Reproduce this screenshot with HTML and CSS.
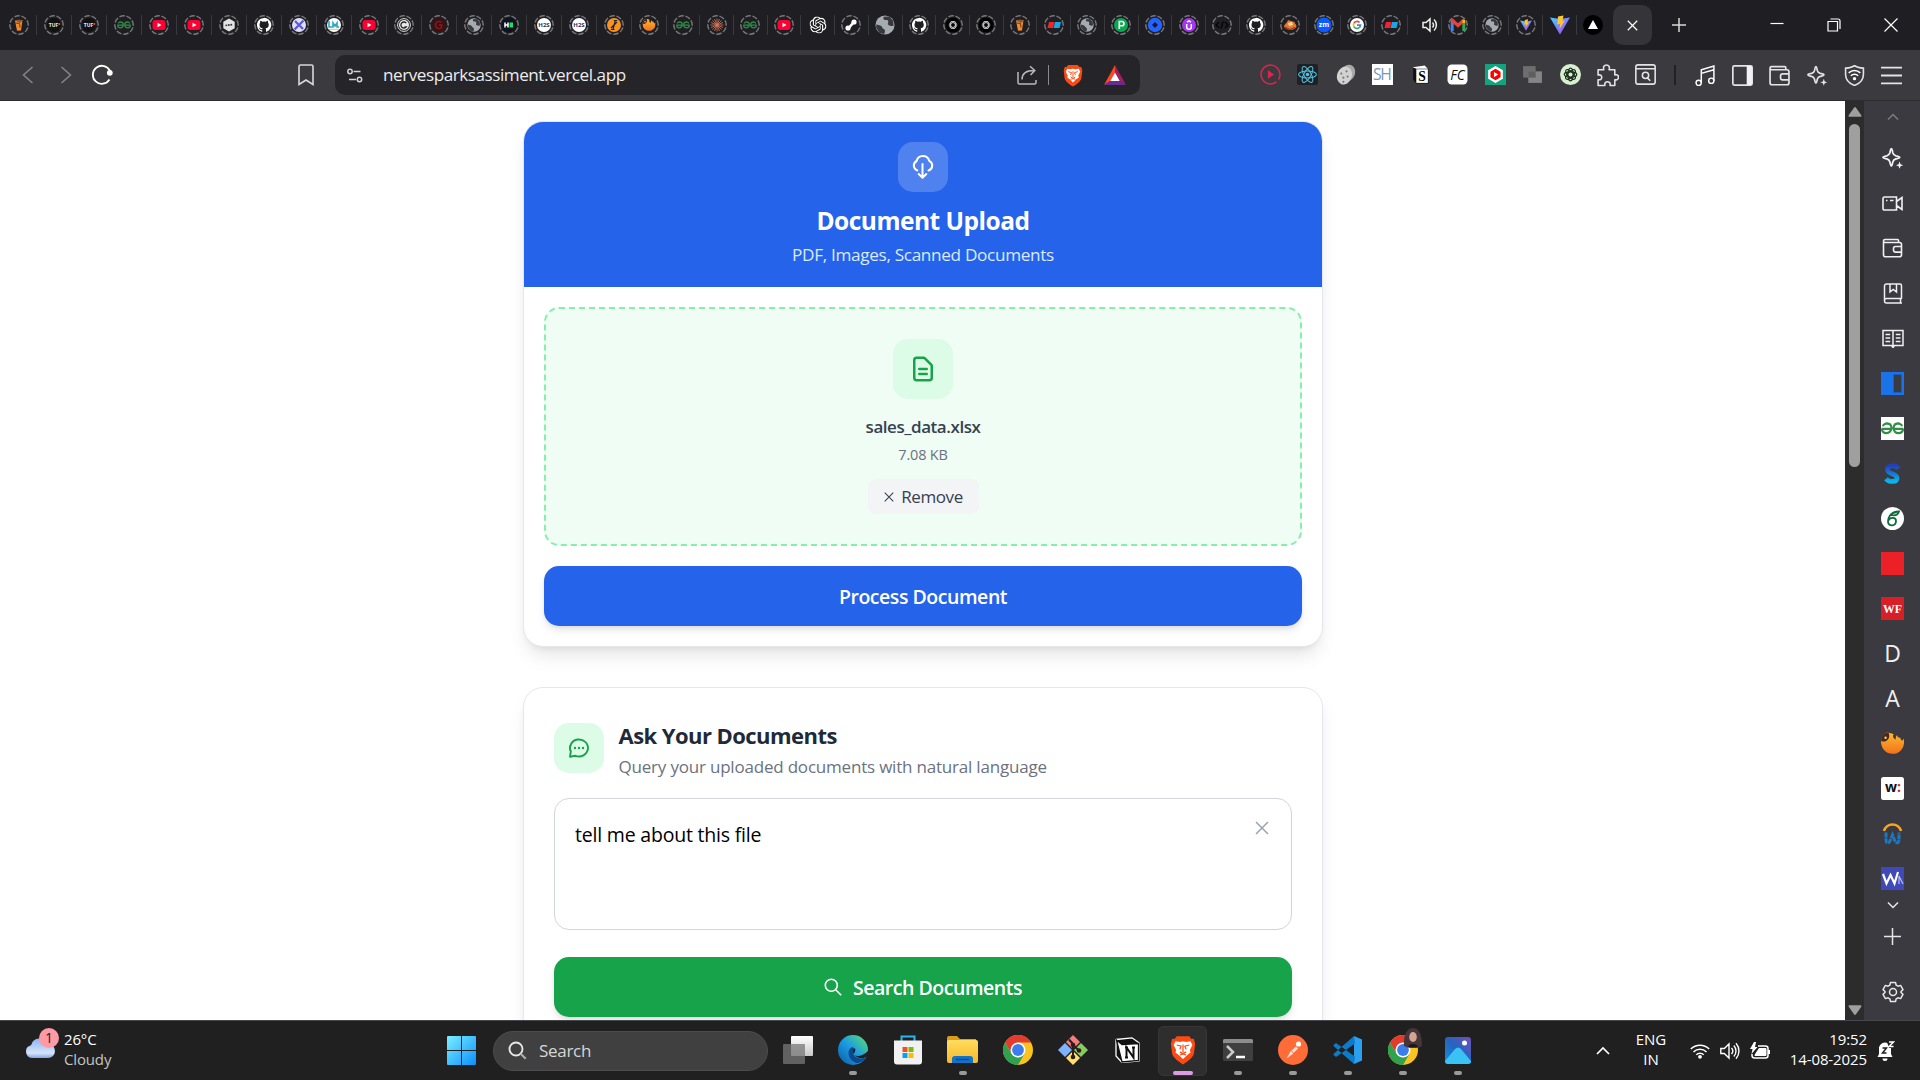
FILE: index.html
```html
<!DOCTYPE html>
<html lang="en">
<head>
<meta charset="utf-8">
<title>nervesparksassiment.vercel.app</title>
<link rel="stylesheet" href="styles.css">
</head>
<body>
<svg class="sprite" aria-hidden="true">
  <defs>
    <linearGradient id="g-vite" x1="0" y1="0" x2="1" y2="1"><stop offset="0" stop-color="#41d1ff"/><stop offset="1" stop-color="#bd34fe"/></linearGradient>
    <linearGradient id="g-win" x1="0" y1="0" x2="1" y2="1"><stop offset="0" stop-color="#7af0ff"/><stop offset="1" stop-color="#0a8fff"/></linearGradient>
    <linearGradient id="g-edge" x1="0" y1="1" x2="1" y2="0"><stop offset="0" stop-color="#0c59a4"/><stop offset=".5" stop-color="#1b9de2"/><stop offset="1" stop-color="#5fe06a"/></linearGradient>
    <linearGradient id="g-folder" x1="0" y1="0" x2="0" y2="1"><stop offset="0" stop-color="#ffdc5e"/><stop offset="1" stop-color="#f7b92a"/></linearGradient>
    <linearGradient id="g-cloud" x1="0" y1="0" x2="0" y2="1"><stop offset="0" stop-color="#8fb2ef"/><stop offset=".75" stop-color="#d5e4fb"/><stop offset="1" stop-color="#84a5e0"/></linearGradient>
    <linearGradient id="g-photo" x1="1" y1="0" x2="0" y2="1"><stop offset="0" stop-color="#7350b8"/><stop offset=".5" stop-color="#2464bf"/><stop offset="1" stop-color="#1490df"/></linearGradient>
    <linearGradient id="g-s" x1="0" y1="0" x2="0" y2="1"><stop offset="0" stop-color="#2340b8"/><stop offset="1" stop-color="#09b4ea"/></linearGradient>
    <linearGradient id="g-fire" x1="0" y1="0" x2="0" y2="1"><stop offset="0" stop-color="#ffb92e"/><stop offset="1" stop-color="#f2711c"/></linearGradient>
    <linearGradient id="g-pane" x1="0" y1="0" x2="0" y2="1"><stop offset="0" stop-color="#fff"/><stop offset="1" stop-color="#c8c8c8"/></linearGradient>
  </defs>
  <symbol id="ring" viewBox="0 0 20 20"><circle cx="10" cy="10" r="9.2" fill="none" stroke="#77767b" stroke-width="1.5" stroke-dasharray="5.4 1.8" transform="rotate(-75 10 10)"/></symbol>
  <symbol id="f-cup" viewBox="0 0 20 20"><path d="M6 5.500 13.500 5 12 15.500l-4 .3z" fill="#f28a2e"/><path d="M6 5.500 10 4.600l4 .8-3 2.500z" fill="#8a5a35"/><path d="m6.500 8 4 .5.500 4" stroke="#6b3d1c" fill="none"/></symbol>
  <symbol id="gfg" viewBox="0 0 20 20"><path d="M9.500 10.200H3.300M9 7.800C7.300 6.500 4.300 7 4.300 8.600M3.500 10.300C4 13.600 8.600 13.700 9.300 10.200 9.800 7.500 7 6.300 5.200 7.300M10.500 10.200h6.200M11 7.800c1.700-1.300 4.700-.8 4.700.8M16.500 10.300c-.5 3.300-5.100 3.400-5.800 0-.5-2.800 2.300-4 4.100-3" fill="none" stroke="#2f8d46" stroke-width="1.300"/></symbol>
  <symbol id="f-yt" viewBox="0 0 20 20"><rect x="3.500" y="5" width="13" height="10" rx="3" fill="#ff0033"/><path d="m8.500 7.700 4 2.300-4 2.300z" fill="#fff"/></symbol>
  <symbol id="f-hex" viewBox="0 0 20 20"><path d="m10 3.500 5.700 3.200v6.600L10 16.500l-5.700-3.200V6.700z" fill="#e3e3e3"/><path d="m6.500 10.500 7-1" stroke="#333" stroke-width="1.700" stroke-dasharray="1.700 .8"/></symbol>
  <symbol id="f-gh" viewBox="0 0 16 16"><path fill="#fff" d="M8 2.300a5.700 5.700 0 0 0-1.800 11.100c.3.100.4-.1.400-.3v-1c-1.600.3-2-.7-2-.7-.2-.6-.6-.8-.6-.8-.5-.4 0-.4 0-.4.600 0 .9.600.9.600.5.900 1.400.6 1.700.5 0-.4.200-.6.400-.8-1.300-.1-2.600-.6-2.600-2.800 0-.6.200-1.100.6-1.500-.1-.2-.3-.8.100-1.500 0 0 .5-.2 1.600.6a5.500 5.500 0 0 1 2.800 0c1.100-.8 1.600-.6 1.600-.6.3.700.1 1.300.1 1.500.4.400.6.900.6 1.500 0 2.200-1.300 2.700-2.600 2.800.2.200.4.500.4 1.100v1.500c0 .2.100.4.400.3A5.700 5.700 0 0 0 8 2.300z"/></symbol>
  <symbol id="f-x" viewBox="0 0 20 20"><circle cx="10" cy="10" r="7" fill="#dfe0fb"/><path d="m5.500 14.500 9-9M6 6l8 8" stroke="#5b5bd6" stroke-width="2.300"/></symbol>
  <symbol id="f-lm" viewBox="0 0 20 20"><circle cx="10" cy="10" r="7" fill="#fff"/><path d="M5 6v6h4V8l2 3 2-3v4h2" stroke="#2aa8c4" stroke-width="1.600" fill="none"/><path d="M5 14.300h10" stroke="#f0c33c"/></symbol>
  <symbol id="f-c" viewBox="0 0 20 20"><circle cx="10" cy="10" r="6.400" fill="none" stroke="#ddd" stroke-width="1"/><circle cx="10" cy="10" r="5" fill="#e8e8e8"/><path d="M12.300 8.200a3 3 0 1 0 0 3.600H10.500" fill="none" stroke="#222" stroke-width="1.300"/></symbol>
  <symbol id="f-red" viewBox="0 0 20 20"><circle cx="10" cy="10" r="7" fill="#3d1013"/><path d="M12.500 7.500a3.500 3.500 0 1 0 0 5V10H10" fill="none" stroke="#8a1a1d" stroke-width="1.500"/></symbol>
  <symbol id="f-globe" viewBox="0 0 20 20"><circle cx="10" cy="10" r="6.700" fill="#a6abb0"/><path d="M4 9.500c2 1 3.500.5 4 2s2 1 2 2.500-.5 1.500-.5 2.500L6 15.500 3.800 12zM9 4.200c-.5 2 .5 2.300 2 2.300s1.500 1.500 1 2.500 1.500 2 4 1.500L15.700 7 13 4z" fill="#38393e"/></symbol>
  <symbol id="f-hr" viewBox="0 0 20 20"><circle cx="10" cy="10" r="7.500" fill="#0e141e"/><path d="M6 7.500v5M9 7.500v5M6 10h3" stroke="#fff" stroke-width="1.500"/><rect x="10.500" y="7.500" width="3.500" height="5" fill="#1fe06a"/></symbol>
  <symbol id="f-i" viewBox="0 0 20 20"><circle cx="10" cy="10" r="7" fill="#f7931e"/><path d="M7 14.500h3.500M9 14.500 11.200 6M9.800 5.500h3.500M7 13l6-6" stroke="#222" stroke-width="1.200"/></symbol>
  <symbol id="fire" viewBox="0 0 20 20"><path d="M0 9C0 4 3 .5 6 .5c1.500 1 4 .5 5 1.500C9.500 4 11 6 13 6.500c-.500-1.500 0-3 1-4 .200 2 1.500 2.500 3 2.500-.2 1 .5 2 1.500 2.500.8-.5 1.300-1 1.500-2C21 13 17 19 10 19 4.500 19 .5 15 0 9z" fill="url(#g-fire)"/><path d="M0 7.500C.5 3 3 .5 6.500.5c1.500 3 .5 6.500-2.500 7.500-1.500.5-3 .3-4-.5z" fill="#4a2a16"/><circle cx="4" cy="5" r="1.100" fill="#e8c48a"/></symbol>
  <symbol id="f-burst" viewBox="0 0 20 20"><path d="M10 3.500v13M3.500 10h13M5.400 5.400l9.200 9.200M14.600 5.400l-9.200 9.200M7.500 4l5 12M12.500 4l-5 12M4 7.500l12 5M4 12.500l12-5" stroke="#d97757" stroke-width=".8"/></symbol>
  <symbol id="f-gpt" viewBox="0 0 24 24"><path fill="#fff" d="M22.280 9.820a5.980 5.980 0 0 0-.52-4.910 6.050 6.050 0 0 0-6.510-2.900A6.070 6.070 0 0 0 4.980 4.180a5.980 5.980 0 0 0-4 2.900 6.050 6.050 0 0 0 .740 7.100 5.980 5.980 0 0 0 .510 4.910 6.050 6.050 0 0 0 6.520 2.900A5.980 5.980 0 0 0 13.260 24a6.060 6.060 0 0 0 5.770-4.210 5.990 5.990 0 0 0 4-2.900 6.060 6.060 0 0 0-.750-7.070zm-9.020 12.610a4.480 4.480 0 0 1-2.880-1.040l.140-.080 4.780-2.760a.8.8 0 0 0 .390-.680v-6.740l2.020 1.170a.070.070 0 0 1 .040.050v5.580a4.500 4.500 0 0 1-4.490 4.500zM3.600 18.300a4.470 4.470 0 0 1-.540-3.010l.140.080 4.780 2.760a.77.77 0 0 0 .780 0l5.840-3.370v2.330a.080.080 0 0 1-.030.060L9.740 19.950A4.500 4.500 0 0 1 3.600 18.300zM2.340 7.900a4.490 4.490 0 0 1 2.370-1.970V11.600a.77.77 0 0 0 .390.680l5.810 3.350-2.020 1.170a.080.080 0 0 1-.070 0l-4.830-2.790A4.500 4.500 0 0 1 2.340 7.870zm16.600 3.860L13.100 8.360 15.120 7.200a.080.080 0 0 1 .070 0l4.830 2.790a4.490 4.490 0 0 1-.680 8.100v-5.680a.79.79 0 0 0-.400-.670zm2.010-3.020-.140-.090-4.770-2.780a.78.78 0 0 0-.790 0L9.410 9.230V6.900a.070.070 0 0 1 .030-.060l4.830-2.790a4.500 4.500 0 0 1 6.680 4.660zM8.310 12.860l-2.020-1.160a.080.080 0 0 1-.040-.060V6.070a4.500 4.500 0 0 1 7.380-3.450l-.140.080L8.700 5.460a.8.800 0 0 0-.390.680zm1.100-2.370 2.600-1.500 2.610 1.500v3l-2.600 1.500-2.610-1.500z"/></symbol>
  <symbol id="f-link" viewBox="0 0 20 20"><path d="M7.300 13.500 13 6.800" stroke="#fff" stroke-width="2.600"/><circle cx="7" cy="13" r="2.600" fill="#fff"/><circle cx="13" cy="7" r="2.600" fill="#fff"/></symbol>
  <symbol id="f-knot" viewBox="0 0 20 20"><circle cx="10" cy="10" r="7.500" fill="#000"/><g fill="none" stroke="#ddd" stroke-width=".7"><ellipse cx="10" cy="10" rx="4" ry="2.300"/><ellipse cx="10" cy="10" rx="4" ry="2.300" transform="rotate(60 10 10)"/><ellipse cx="10" cy="10" rx="4" ry="2.300" transform="rotate(120 10 10)"/></g></symbol>
  <symbol id="f-flag" viewBox="0 0 20 20"><path d="M5 7h5.500L9 13H3.500z" fill="#f4232b"/><path d="M11 7h6l-1.500 6H9.500z" fill="#17a6e6"/></symbol>
  <symbol id="f-p" viewBox="0 0 20 20"><circle cx="10" cy="10" r="7" fill="#0aa84f"/><path d="M8.300 14V6.500h2.500a2.100 2.100 0 0 1 0 4.300H8.500" fill="none" stroke="#fff" stroke-width="1.600"/></symbol>
  <symbol id="f-diam" viewBox="0 0 20 20"><circle cx="10" cy="10" r="7.200" fill="#2563ff"/><path d="m10 7 3 3-3 3-3-3z" fill="#161a3a"/></symbol>
  <symbol id="f-u" viewBox="0 0 20 20"><circle cx="10" cy="10" r="7" fill="#a435f0"/><path d="M7.700 9v3a2.300 2.300 0 0 0 4.600 0V9M8 7.200l2-1.400 2 1.400" fill="none" stroke="#fff" stroke-width="1.500"/></symbol>
  <symbol id="f-code" viewBox="0 0 20 20"><path d="m7 7-3 3 3 3M13 7l3 3-3 3M11 6.500l-2 7" fill="none" stroke="#050505" stroke-width="1.400"/></symbol>
  <symbol id="f-fox" viewBox="0 0 20 20"><path d="M4 12c0-3 3-3.500 4-7l3 1 3.500 1c0 2 2 2 2 4.500-2 4-8 5-12.500.5z" fill="#e8772e"/><path d="m8 8 4-1 1 3-4 1z" fill="#ffd9a0"/><path d="m5 12 5 2.500 5-2" stroke="#7a3413" fill="none"/></symbol>
  <symbol id="f-g" viewBox="0 0 20 20"><circle cx="10" cy="10" r="7" fill="#fff"/><g fill="none" stroke-width="1.700"><path d="M12.500 7.500A3.500 3.500 0 0 0 6.800 8.500" stroke="#ea4335"/><path d="M6.800 8.500a3.500 3.500 0 0 0 0 3" stroke="#fbbc04"/><path d="M6.800 11.500a3.500 3.500 0 0 0 5.400 1.200" stroke="#34a853"/><path d="M12.200 12.700a3.500 3.500 0 0 0 1.300-2.500H10" stroke="#4285f4"/></g></symbol>
  <symbol id="f-gmail" viewBox="0 0 20 20"><path d="M4.200 16V6" stroke="#4285f4" stroke-width="3"/><path d="M15.800 16V6" stroke="#34a853" stroke-width="3"/><path d="m3.500 4.500 6.500 6 6.500-6" fill="none" stroke="#ea4335" stroke-width="3.400"/><path d="M15.800 8V5" stroke="#fbbc04" stroke-width="2.500"/></symbol>
  <symbol id="vite" viewBox="0 0 20 20"><path d="m0 2.500 10 17 10-17-10 1.500z" fill="url(#g-vite)"/><path d="M8 1.500 13.500.5 12.500 6l2.500-.4L9.500 14l.7-5.200-3 .6z" fill="#ffc52e"/></symbol>
  <symbol id="brave" viewBox="0 0 20 24"><path d="M5 1h10l1.800 2.200 1.900-.2 1 4-1 8c-1 3.500-6 7-8.700 8.500C7.300 22 2.300 18.500 1.300 15l-1-8 1-4 1.900.2z" fill="#fb4b12"/><path d="m4 5 3.500.5L10 5l2.500.5L16 5l1.500 3-2 4 .5 2-3 2.300-3 2.900-3-2.900L4 14l.5-2-2-4z" fill="#fff"/><path d="m5 8 3.500 1-1 2.500M15 8l-3.500 1 1 2.500M10 7.500V14m-2.500-.5L10 15l2.500-1.500M7.500 16l2.500-.8 2.500.8" fill="none" stroke="#fb4b12" stroke-width="1"/></symbol>
  <symbol id="spark" viewBox="0 0 20 20"><path d="M8.500 1.500C9.300 1.500 9.300 3 9.800 5.200c.5 1.800 1 2.300 2.800 2.800 2.200.5 3.600.6 3.600 1.400s-1.400.9-3.600 1.400c-1.800.5-2.300 1-2.800 2.800-.5 2.200-.5 3.700-1.300 3.700s-.8-1.500-1.300-3.700c-.5-1.800-1-2.300-2.800-2.800C2.200 10.300.8 10.200.8 9.400S2.200 8.500 4.400 8c1.800-.5 2.300-1 2.800-2.800.5-2.200.5-3.700 1.300-3.700z" fill="none" stroke="currentColor" stroke-width="1.600"/><path d="m16 13.200.9 2.400 2.400.9-2.400.9-.9 2.400-.9-2.400-2.400-.9 2.400-.9z" fill="currentColor"/></symbol>
  <symbol id="wallet" viewBox="0 0 20 20"><path d="M16 4.500V2.500a1 1 0 0 0-1-1H2.500a1.500 1.500 0 0 0 0 3H17a2 2 0 0 1 2 2v10.300a2 2 0 0 1-2 2H3a2 2 0 0 1-2-2V3M19 8.500h-6a2 2 0 0 0-2 2v1.600a2 2 0 0 0 2 2h6" fill="none" stroke="currentColor" stroke-width="1.600"/></symbol>
  <symbol id="chrome" viewBox="0 0 30 30"><circle cx="15" cy="15" r="15" fill="#fcc31e"/><path d="M15 7.500H28A15 15 0 0 0 2 7.500L8.500 18.800z" fill="#e33b2e"/><path d="M2 7.500A15 15 0 0 0 15 30l6.500-11.200L15 22.500l-6.500-3.700z" fill="#2fa14f"/><circle cx="15" cy="15" r="7.500" fill="#fff"/><circle cx="15" cy="15" r="5.900" fill="#3b7ded"/></symbol>
  <symbol id="close" viewBox="0 0 14 14"><path d="m1 1 12 12M13 1 1 13" fill="none" stroke="currentColor" stroke-width="1.500"/></symbol>
</svg>

<header class="tabstrip">
  <div class="tabs wide">
    <span class="tab"><svg><use href="#ring"/><use href="#f-cup"/></svg></span>
    <span class="tab"><svg viewBox="0 0 20 20"><use href="#ring"/><circle cx="10" cy="10" r="7" fill="#111"/><text x="9.500" y="11.800" text-anchor="middle" font-size="5" font-weight="700" fill="#eee">TUF</text><circle cx="15.300" cy="9" r="1" fill="#e5573b"/></svg></span>
    <span class="tab"><svg viewBox="0 0 20 20"><use href="#ring"/><circle cx="10" cy="10" r="7" fill="#111"/><text x="9.500" y="11.800" text-anchor="middle" font-size="5" font-weight="700" fill="#eee">TUF</text><circle cx="15.300" cy="9" r="1" fill="#e5573b"/></svg></span>
    <span class="tab"><svg><use href="#ring"/><use href="#gfg"/></svg></span>
    <span class="tab"><svg><use href="#ring"/><use href="#f-yt"/></svg></span>
    <span class="tab"><svg><use href="#ring"/><use href="#f-yt"/></svg></span>
    <span class="tab"><svg><use href="#ring"/><use href="#f-hex"/></svg></span>
    <span class="tab"><svg><use href="#ring"/><use href="#f-gh"/></svg></span>
    <span class="tab"><svg><use href="#ring"/><use href="#f-x"/></svg></span>
    <span class="tab"><svg><use href="#ring"/><use href="#f-lm"/></svg></span>
    <span class="tab"><svg><use href="#ring"/><use href="#f-yt"/></svg></span>
    <span class="tab"><svg><use href="#ring"/><use href="#f-c"/></svg></span>
    <span class="tab"><svg><use href="#ring"/><use href="#f-red"/></svg></span>
    <span class="tab"><svg><use href="#ring"/><use href="#f-globe"/></svg></span>
    <span class="tab"><svg><use href="#ring"/><use href="#f-hr"/></svg></span>
    <span class="tab"><svg viewBox="0 0 20 20"><use href="#ring"/><circle cx="10" cy="10" r="7" fill="#fff"/><text x="10" y="12.200" text-anchor="middle" font-size="6" font-weight="700" fill="#27345f">H2S</text></svg></span>
    <span class="tab"><svg viewBox="0 0 20 20"><use href="#ring"/><circle cx="10" cy="10" r="7" fill="#fff"/><text x="10" y="12.200" text-anchor="middle" font-size="6" font-weight="700" fill="#27345f">H2S</text></svg></span>
    <span class="tab"><svg><use href="#ring"/><use href="#f-i"/></svg></span>
    <span class="tab"><svg><use href="#ring"/><use href="#fire" x="3.500" y="3.500" width="13" height="13"/></svg></span>
  </div>
  <div class="tabs">
    <span class="tab"><svg><use href="#ring"/><use href="#gfg"/></svg></span>
    <span class="tab"><svg><use href="#ring"/><use href="#f-burst"/></svg></span>
    <span class="tab"><svg><use href="#ring"/><use href="#gfg"/></svg></span>
    <span class="tab"><svg><use href="#ring"/><use href="#f-yt"/></svg></span>
    <span class="tab"><svg><use href="#f-gpt" x="1.500" y="1.500" width="17" height="17"/></svg></span>
    <span class="tab"><svg><use href="#ring"/><use href="#f-link"/></svg></span>
    <span class="tab"><svg viewBox="3 3 14 14"><use href="#f-globe" width="20" height="20"/></svg></span>
    <span class="tab"><svg><use href="#ring"/><use href="#f-gh"/></svg></span>
    <span class="tab"><svg><use href="#ring"/><use href="#f-knot"/></svg></span>
    <span class="tab"><svg><use href="#ring"/><use href="#f-knot"/></svg></span>
    <span class="tab"><svg><use href="#ring"/><use href="#f-cup"/></svg></span>
    <span class="tab"><svg><use href="#ring"/><use href="#f-flag"/></svg></span>
    <span class="tab"><svg><use href="#ring"/><use href="#f-globe"/></svg></span>
    <span class="tab"><svg><use href="#ring"/><use href="#f-p"/></svg></span>
    <span class="tab"><svg><use href="#ring"/><use href="#f-diam"/></svg></span>
    <span class="tab"><svg><use href="#ring"/><use href="#f-u"/></svg></span>
    <span class="tab"><svg><use href="#ring"/><use href="#f-code"/></svg></span>
    <span class="tab"><svg><use href="#ring"/><use href="#f-gh"/></svg></span>
    <span class="tab"><svg><use href="#ring"/><use href="#f-fox"/></svg></span>
    <span class="tab"><svg viewBox="0 0 20 20"><use href="#ring"/><circle cx="10" cy="10" r="7.500" fill="#0b5cff"/><text x="10" y="12.300" text-anchor="middle" font-size="7" font-weight="700" fill="#fff">zm</text></svg></span>
    <span class="tab"><svg><use href="#ring"/><use href="#f-g"/></svg></span>
    <span class="tab"><svg><use href="#ring"/><use href="#f-flag"/></svg></span>
    <span class="tab audio"><svg width="16" height="16" viewBox="0 0 16 16"><path d="M1 5.500h3L8 2v12l-4-3.500H1zM10.500 5.500a3.500 3.500 0 0 1 0 5M12 2.500a7.500 7.500 0 0 1 0 11" fill="none" stroke="#eee" stroke-width="1.500"/></svg></span>
    <span class="tab"><svg><use href="#ring"/><use href="#f-gmail"/></svg></span>
    <span class="tab"><svg><use href="#ring"/><use href="#f-globe"/></svg></span>
    <span class="tab"><svg><use href="#ring"/><use href="#vite" x="4" y="4" width="12" height="12"/></svg></span>
    <span class="tab"><svg><use href="#vite"/></svg></span>
    <span class="tab last"><svg viewBox="0 0 20 20"><circle cx="10" cy="10" r="10" fill="#000"/><path d="m10 5 5 9H5z" fill="#fff"/></svg></span>
  </div>
  <span class="tab-active"><svg width="11" height="11"><use href="#close"/></svg></span>
  <span class="tab-new"><svg width="14" height="14" viewBox="0 0 14 14"><path d="M7 0v14M0 7h14" stroke="#d8d8da" stroke-width="1.500"/></svg></span>
  <div class="window-controls">
    <svg width="14" height="14" viewBox="0 0 14 14"><path d="M.5 5.500h13" stroke="#fff" stroke-width="1.200"/></svg>
    <svg width="14" height="14" viewBox="0 0 14 14"><path d="M1 3.500h9.500V13H1zM3.500 1h7.500a2 2 0 0 1 2 2v8" fill="none" stroke="#fff" stroke-width="1.200"/></svg>
    <svg width="14" height="14" viewBox="0 0 14 14"><path d="m.5.500 13 13m0-13-13 13" stroke="#fff" stroke-width="1.200"/></svg>
  </div>
</header>

<nav class="toolbar">
  <div class="nav-buttons">
    <svg width="12" height="18" viewBox="0 0 12 18"><path d="M10.500 1 1.500 9l9 8" fill="none" stroke="#87868b" stroke-width="1.500"/></svg>
    <svg width="12" height="18" viewBox="0 0 12 18"><path d="m1.500 1 9 8-9 8" fill="none" stroke="#87868b" stroke-width="1.500"/></svg>
    <svg class="reload" width="22" height="22" viewBox="0 0 22 22"><path d="M18.500 15.500A9 9 0 1 1 19 7" fill="none" stroke="#fff" stroke-width="1.800"/><circle cx="18.800" cy="8.800" r="2.900" fill="#fff"/></svg>
  </div>
  <svg class="bookmark" width="16" height="22" viewBox="0 0 16 22"><path d="M1 2.500A1.500 1.500 0 0 1 2.500 1h11A1.500 1.500 0 0 1 15 2.500v18L8 16l-7 4.500z" fill="none" stroke="#d8d8dc" stroke-width="1.600"/></svg>
  <div class="address">
    <svg width="16" height="15" viewBox="0 0 16 15"><g fill="none" stroke="#d0d0d4" stroke-width="1.500"><circle cx="3" cy="3.500" r="2.200"/><path d="M6.500 3.500h7M2 11.500h7"/><circle cx="12.500" cy="11.500" r="2.200"/></g></svg>
    <span class="url">nervesparksassiment.vercel.app</span>
    <svg class="share" width="20" height="20" viewBox="0 0 20 20"><path d="M1 7v10.500a1.500 1.500 0 0 0 1.500 1.500h15a1.500 1.500 0 0 0 1.500-1.500V15M5 14.500C5 8.500 9 5.500 17 5.500M13 1.300l4.800 4.200-4.300 4.500" fill="none" stroke="#b9b9bd" stroke-width="1.500"/></svg>
    <span class="rule"></span>
    <svg width="20" height="23"><use href="#brave"/></svg>
    <svg width="22" height="20" viewBox="0 0 22 20"><path d="M11 0 0 20l6.500-4L11 7.500z" fill="#ff4724"/><path d="m11 0 11 20-6.500-4L11 7.500z" fill="#9e1f63"/><path d="M0 20h22l-6.500-4h-9z" fill="#662d91"/><path d="m11 7.500 4.700 8.500H6.300z" fill="#fff"/></svg>
  </div>
  <div class="extensions">
    <span><svg viewBox="0 0 20 20"><circle cx="10" cy="10" r="9" fill="none" stroke="#e0234e" stroke-width="1.500" stroke-dasharray="5 3 48 1"/><path d="m7.500 6 6 4-6 4z" fill="#e0234e"/></svg></span>
    <span><svg viewBox="0 0 20 20"><rect width="20" height="20" rx="2" fill="#202024"/><g fill="none" stroke="#53c1de"><ellipse cx="10" cy="10" rx="8.500" ry="3.300"/><ellipse cx="10" cy="10" rx="8.500" ry="3.300" transform="rotate(60 10 10)"/><ellipse cx="10" cy="10" rx="8.500" ry="3.300" transform="rotate(120 10 10)"/></g><circle cx="10" cy="10" r="1.700" fill="#53c1de"/></svg></span>
    <span><svg viewBox="0 0 20 20"><ellipse cx="12.500" cy="8.500" rx="6.500" ry="8" fill="#a9a9a9" transform="rotate(20 12.500 8.500)"/><ellipse cx="9" cy="11" rx="7" ry="8.700" fill="#d2d2d2" transform="rotate(20 9 11)"/><g fill="#777"><circle cx="6" cy="9" r="1"/><circle cx="11" cy="7" r="1"/><circle cx="8" cy="13" r="1"/><circle cx="12" cy="12" r="1"/><circle cx="8" cy="17" r="1"/></g></svg></span>
    <span><svg viewBox="0 0 20 20"><rect width="20" height="20" fill="#fff"/><text x="10" y="15.500" text-anchor="middle" font-size="15" fill="#7b97b5" textLength="18">SH</text></svg></span>
    <span><svg viewBox="0 0 20 20"><path d="M3 3.500 14 2l3.500 3v13.500H6L3 15z" fill="#111"/><path d="M2.500 3 14 1.500l3 3H6z" fill="#fff"/><rect x="6" y="5" width="11" height="13" fill="#fff"/><text x="11.500" y="16" text-anchor="middle" font-size="13" font-weight="700" class="serif" fill="#000">S</text></svg></span>
    <span><svg viewBox="0 0 20 20"><rect x=".5" y=".5" width="19" height="19" rx="4" fill="#fff"/><text x="10" y="15" text-anchor="middle" font-size="13" font-style="italic" fill="#111" textLength="14">FC</text></svg></span>
    <span><svg viewBox="0 0 20 20"><rect width="20" height="20" fill="#12a37f"/><path d="m10 2 7 4v8l-7 4-7-4V6z" fill="#fff"/><path d="m10 4.500 4.800 2.800v5.400L10 15.500l-4.800-2.800V7.300z" fill="#f00"/><path d="m8.500 7.500 4 2.500-4 2.500z" fill="#fff"/></svg></span>
    <span><svg viewBox="0 0 20 20"><rect x="1" y="2" width="12" height="11" fill="#6e6e70"/><rect x="6" y="7" width="13" height="11" fill="#858587"/><rect x="6" y="7" width="7" height="6" fill="#5f5f62"/></svg></span>
    <span><svg viewBox="0 0 20 20"><circle cx="10" cy="10" r="10" fill="#d7f0cf"/><g fill="none" stroke="#1b2b1b" stroke-width="1.100"><ellipse cx="10" cy="10" rx="6" ry="2.500"/><ellipse cx="10" cy="10" rx="6" ry="2.500" transform="rotate(45 10 10)"/><ellipse cx="10" cy="10" rx="6" ry="2.500" transform="rotate(90 10 10)"/><ellipse cx="10" cy="10" rx="6" ry="2.500" transform="rotate(135 10 10)"/></g></svg></span>
    <span><svg class="large" viewBox="0 0 22 22"><path d="M2 5.500h5.500c-1-3 .5-4.500 2.500-4.500s3.500 1.500 2.500 4.500H18v5c3-.8 3.500 1 3.500 2.200s-1 3-3.500 2.300V20.500h-4.500c.5-2.500-1-3.500-2.500-3.500s-3 1-2.500 3.500H2v-5.500c2.500.5 3.500-.8 3.500-2.300S4.500 10 2 10.500z" fill="none" stroke="#e4e4e6" stroke-width="1.500" stroke-linejoin="round"/></svg></span>
    <span><svg viewBox="0 0 20 20"><g fill="none" stroke="#e4e4e6" stroke-width="1.500"><rect x=".8" y=".8" width="18.400" height="18.400" rx="2"/><path d="M1 4.500h18M11.500 13l3 3"/><circle cx="10" cy="10.800" r="3"/></g></svg></span>
  </div>
  <span class="rule dark"></span>
  <div class="browser-tools">
    <span><svg viewBox="0 0 20 20"><g fill="none" stroke="#fff" stroke-width="1.400"><circle cx="3.500" cy="17" r="2.500"/><circle cx="15.500" cy="15" r="2.500"/><path d="M6 17V4.500l12-3.500v14M6 8l12-3.500"/></g></svg></span>
    <span><svg viewBox="0 0 20 20"><rect x=".8" y=".8" width="18.400" height="18.400" rx="1.500" fill="none" stroke="#e4e4e6" stroke-width="1.600"/><path d="M14 1h5v18h-5z" fill="#f2f2f4"/></svg></span>
    <span><svg><use href="#wallet"/></svg></span>
    <span><svg><use href="#spark"/></svg></span>
    <span><svg viewBox="0 0 20 20"><path d="M10 .5c2 1.700 5 2.200 8.500 2.500v6c0 5-3.500 8.500-8.500 10.500C5 17.500 1.500 14 1.500 9V3C5 2.700 8 2.200 10 .5z" fill="none" stroke="#e4e4e6" stroke-width="1.500"/><path d="M4.500 7.500a8 8 0 0 1 11 0M6.500 10.200a5 5 0 0 1 7 0" fill="none" stroke="#fff" stroke-width="1.500"/><circle cx="10" cy="13" r="1.600" fill="#fff"/></svg></span>
    <span><svg viewBox="0 0 20 20"><path d="M0 2.500h20M0 10h20M0 17.500h20" stroke="#e4e4e6" stroke-width="1.700"/></svg></span>
  </div>
</nav>

<div class="viewport">
  <main class="page">
    <section class="card">
      <div class="card-header">
        <div class="icon-tile on-blue"><svg width="24" height="26" viewBox="0 0 24 26"><path d="M6.300 16.500A5.200 5.200 0 0 1 5.600 7a6.500 6.500 0 0 1 12.600-.2 5.200 5.200 0 0 1-.7 9.700M11.500 10V23.500M7.700 20l3.800 3.800 3.800-3.800" fill="none" stroke="#fff" stroke-width="2" stroke-linecap="round" stroke-linejoin="round"/></svg></div>
        <h2>Document Upload</h2>
        <p>PDF, Images, Scanned Documents</p>
      </div>
      <div class="card-body">
        <div class="dropzone">
          <div class="icon-tile big"><svg width="30" height="30" viewBox="0 0 24 24"><path d="M9 12h6m-6 4h6m2 5H7a2 2 0 0 1-2-2V5a2 2 0 0 1 2-2h5.586a1 1 0 0 1 .707.293l5.414 5.414a1 1 0 0 1 .293.707V19a2 2 0 0 1-2 2z" fill="none" stroke="#16a34a" stroke-width="2" stroke-linecap="round" stroke-linejoin="round"/></svg></div>
          <div class="file-name">sales_data.xlsx</div>
          <div class="file-size">7.08 KB</div>
          <button class="remove"><svg width="10" height="10"><use href="#close"/></svg><span>Remove</span></button>
        </div>
        <button class="primary blue">Process Document</button>
      </div>
    </section>

    <section class="card ask">
      <div class="ask-header">
        <div class="icon-tile"><svg width="24" height="24" viewBox="0 0 24 24"><path d="M3 20.800 3.800 15.500A9 8.500 0 1 1 8.500 19.800z" fill="none" stroke="#16a34a" stroke-width="1.900" stroke-linejoin="round"/><g fill="#16a34a"><circle cx="8" cy="12" r="1.200"/><circle cx="12" cy="12" r="1.200"/><circle cx="16" cy="12" r="1.200"/></g></svg></div>
        <div>
          <h3>Ask Your Documents</h3>
          <p>Query your uploaded documents with natural language</p>
        </div>
      </div>
      <div class="query"><span>tell me about this file</span><svg width="14" height="14"><use href="#close"/></svg></div>
      <button class="primary green"><svg width="18" height="18" viewBox="0 0 18 18"><circle cx="7.300" cy="7.300" r="6" fill="none" stroke="#fff" stroke-width="1.600"/><path d="m11.700 11.700 5.500 5.500" stroke="#fff" stroke-width="1.600"/></svg><span>Search Documents</span></button>
    </section>
  </main>

  <div class="scrollbar">
    <svg width="14" height="10" viewBox="0 0 14 10"><path d="M6 .8a1.200 1.200 0 0 1 2 0l5.300 7.500c.4.800 0 1.500-.8 1.500h-11c-.8 0-1.200-.7-.8-1.500z" fill="#9f9f9f"/></svg>
    <div class="thumb"></div>
    <svg class="down" width="14" height="10" viewBox="0 0 14 10"><path d="M6 9.200a1.200 1.200 0 0 0 2 0l5.300-7.500c.4-.8 0-1.500-.8-1.500h-11c-.8 0-1.200.7-.8 1.500z" fill="#9f9f9f"/></svg>
  </div>

  <aside class="sidebar">
    <div class="scroll-up"><svg width="12" height="7" viewBox="0 0 12 7"><path d="m1 6.500 5-5 5 5" fill="none" stroke="#7c7b80" stroke-width="1.500"/></svg></div>
    <span class="item"><svg width="22" height="22"><use href="#spark"/></svg></span>
    <span class="item"><svg width="21" height="15" viewBox="0 0 21 15"><path d="M14.500 1H2.500A1.500 1.500 0 0 0 1 2.500v10A1.500 1.500 0 0 0 2.500 14h12zM14.500 5.500 20 1.500v12l-5.500-4M4 4.500h1.500M8 4.500h3.500" fill="none" stroke="#f0f0f2" stroke-width="1.600"/></svg></span>
    <span class="item"><svg width="21" height="20"><use href="#wallet"/></svg></span>
    <span class="item"><svg width="20" height="21" viewBox="0 0 20 21"><path d="M18.500 15.500v-13A1.500 1.500 0 0 0 17 1H3.500a2 2 0 0 0-2 2v15a2 2 0 0 0 2 2h15.500M19 15.500H3.500a2 2 0 0 0-2 2M17.500 16v4M7 1v8l3.200-2.500L13.500 9V1" fill="none" stroke="#f0f0f2" stroke-width="1.500"/></svg></span>
    <span class="item"><svg width="22" height="20" viewBox="0 0 22 20"><path d="M11 2.500H1v15h8.500l1.500 2 1.500-2H21v-15zM11 2.500v16M3.500 6.500h4.700M3.500 10h4.700M3.500 13.500h4.700M13.800 6.500h4.700M13.800 10h4.700M13.800 13.500h4.700" fill="none" stroke="#f0f0f2" stroke-width="1.500"/></svg></span>
    <span class="item"><svg width="23" height="23" viewBox="0 0 23 23"><path d="M0 0h23v23H0z" fill="#1a73e8"/><path d="M12.500 2.500h8v18h-8z" fill="#3b3a40" stroke="#1560c8"/></svg></span>
    <span class="item"><svg class="white" width="23" height="23" viewBox="3 3 14 14"><use href="#gfg" width="20" height="20"/></svg></span>
    <span class="item"><svg width="23" height="23" viewBox="0 0 23 23"><path d="M17.500 6.500C15 2.500 6.500 3 6.500 7.500c0 5 9.500 3.500 9.500 8.500 0 4.500-8 4.500-11 .7" fill="none" stroke="url(#g-s)" stroke-width="4.800"/></svg></span>
    <span class="item"><svg width="23" height="23" viewBox="0 0 23 23"><circle cx="11.500" cy="11.500" r="11.500" fill="#fff"/><path d="M15.500 5C9 6 7 11 7 14.500c0 5.500 8 5 8-.5 0-4-6-4-7.500-.5M10 8c1.500-3 5-3.500 8-3.500-1 3-4 4.500-8 3.500z" fill="none" stroke="#0d6b3c" stroke-width="1.800"/></svg></span>
    <span class="item"><svg width="23" height="23" viewBox="0 0 23 23"><path d="M0 0h23v23H0z" fill="#ec2127"/></svg></span>
    <span class="item"><svg width="23" height="23" viewBox="0 0 23 23"><path d="M0 0h23v23H0z" fill="#d81f26"/><text x="11.500" y="15.500" text-anchor="middle" font-size="12" font-weight="700" class="serif" fill="#fff" textLength="19" lengthAdjust="spacingAndGlyphs">WF</text></svg></span>
    <span class="item letter">D</span>
    <span class="item letter">A</span>
    <span class="item"><svg width="23" height="23"><use href="#fire"/></svg></span>
    <span class="item"><svg width="23" height="23" viewBox="0 0 23 23"><rect width="23" height="23" rx="2.500" fill="#fff"/><text x="4" y="15" font-size="14" font-weight="700" fill="#111">w<tspan fill="#e02020">:</tspan></text></svg></span>
    <span class="item"><svg width="23" height="23" viewBox="0 0 23 23"><path d="M3 9a8.800 8.800 0 0 1 17 0" fill="none" stroke="#f5a623" stroke-width="2.500"/><path d="M5 10.500v7.500c0 3 2.500 4 4 1l2.500-6 2.500 6c1.500 3 4 2 4-1v-7.500" fill="none" stroke="#1b78c2" stroke-width="3" stroke-dasharray="5 .7"/></svg></span>
    <span class="item"><svg width="23" height="23" viewBox="0 0 23 23"><path d="M0 0h23v23H0z" fill="#4049b9"/><path d="m2 7 3.500 9.500L9.500 8l4 8.500L17 5" fill="none" stroke="#fff" stroke-width="2.200"/><path d="M18 17V9l4 8" fill="none" stroke="#b8bdf0" stroke-width="1.200"/></svg></span>
    <div class="scroll-down"><svg width="12" height="7" viewBox="0 0 12 7"><path d="m1 .5 5 5 5-5" fill="none" stroke="#e6e6e8" stroke-width="1.500"/></svg></div>
    <div class="add"><svg width="17" height="17" viewBox="0 0 17 17"><path d="M8.500 0v17M0 8.500h17" stroke="#e6e6e8" stroke-width="1.500"/></svg></div>
    <div class="settings"><svg width="22" height="22" viewBox="0 0 22 22"><path d="m8.500 1.500-.7 2.700-1.700 1-2.700-.8L1 8.600l2 1.900v1l-2 1.900 2.400 4.200 2.700-.8 1.700 1 .7 2.700h5l.7-2.700 1.700-1 2.700.8 2.400-4.200-2-1.900v-1l2-1.900-2.400-4.200-2.700.8-1.700-1-.7-2.700z" fill="none" stroke="#e6e6e8" stroke-width="1.500" stroke-linejoin="round"/><circle cx="11" cy="11" r="3.500" fill="none" stroke="#e6e6e8" stroke-width="1.500"/></svg></div>
  </aside>
</div>

<footer class="taskbar">
  <div class="weather">
    <span class="weather-icon"><svg width="30" height="22" viewBox="0 0 30 22"><path d="M7 22a6.500 6.500 0 0 1-1-12.800A9 9 0 0 1 23 8a7 7 0 0 1 0 14z" fill="url(#g-cloud)"/></svg><b>1</b></span>
    <span class="weather-text"><span>26°C</span><span class="dim">Cloudy</span></span>
  </div>
  <div class="launcher">
    <svg width="29" height="29" viewBox="0 0 29 29"><path d="M0 1a1 1 0 0 1 1-1h13v14H0zM15 0h13a1 1 0 0 1 1 1v13H15zM0 15h14v14H1a1 1 0 0 1-1-1zM15 15h14v13a1 1 0 0 1-1 1H15z" fill="url(#g-win)"/></svg>
    <div class="search"><svg width="19" height="19" viewBox="0 0 19 19"><circle cx="8" cy="8" r="6.500" fill="none" stroke="#e6e6e6" stroke-width="1.900"/><path d="m12.700 12.700 5 5" stroke="#aaa" stroke-width="2.200"/></svg><span>Search</span></div>
  </div>
  <div class="apps">
    <span class="app"><svg width="30" height="28" viewBox="0 0 30 28"><rect x="8" y="0" width="22" height="20" rx="1" fill="url(#g-pane)"/><rect x="0" y="8" width="22" height="20" rx="1" fill="#777" fill-opacity=".75"/></svg></span>
    <span class="app run"><svg width="30" height="30" viewBox="0 0 30 30"><circle cx="15" cy="15" r="15" fill="url(#g-edge)"/><path d="M14 12c-6 3-4 13 4 16 4 0 8-2 10-6-5 3-12 1-13-4-.3-2 1-3 1.500-4-.5-1-1.500-2-2.500-2z" fill="#0b4a8f"/><path d="M15.500 14c3-2 2 3 0 5 1 3 9 3 14.500-3v5c-4 3-10 2.500-12.500 0-2-1.500-3.500-4-2-7z" fill="#202020"/></svg></span>
    <span class="app"><svg width="30" height="30" viewBox="0 0 30 30"><path d="M8.500 7V1.500h13V7" fill="none" stroke="#29b6ee" stroke-width="2"/><path d="M1 5.500h28v21a3 3 0 0 1-3 3H4a3 3 0 0 1-3-3z" fill="#f1f1f1"/><path d="M9.500 12h5v5h-5z" fill="#f25022"/><path d="M15.500 12h5v5h-5z" fill="#7fba00"/><path d="M9.500 18h5v5h-5z" fill="#00a4ef"/><path d="M15.500 18h5v5h-5z" fill="#ffb900"/></svg></span>
    <span class="app run"><svg width="31" height="28" viewBox="0 0 31 28"><path d="M0 2a2 2 0 0 1 2-2h8l3 3h16v8H0z" fill="#dd9b1b"/><rect y="4" width="31" height="23" rx="2" fill="url(#g-folder)"/><path d="M5 27v-4a3 3 0 0 1 3-3h15a3 3 0 0 1 3 3v4z" fill="#1373c9"/><path d="M9 23.500h13" stroke="#0b4c91" stroke-width="1.500"/></svg></span>
    <span class="app"><svg width="30" height="30"><use href="#chrome"/></svg></span>
    <span class="app"><svg width="30" height="30" viewBox="0 0 30 30"><path d="m15 0 7 7-7 7-7-7z" fill="#f47c7c"/><path d="m23 8 7 7-7 7-7-7z" fill="#86cd5c"/><path d="m15 16 7 7-7 7-7-7z" fill="#ffdf71"/><path d="m7 8 7 7-7 7-7-7z" fill="#80b3ff"/><path d="M11 4.500 15 9v13M15 10l6 5.500" fill="none" stroke="#2c1c1c" stroke-width="2"/><circle cx="15" cy="10" r="2.300" fill="#2c1c1c"/><circle cx="15" cy="22" r="2.300" fill="#2c1c1c"/><circle cx="21" cy="15.500" r="2.300" fill="#2c1c1c"/></svg></span>
    <span class="app"><svg width="25" height="26" viewBox="0 0 25 26"><path d="M1 2.500 17 .8l7 5V24l-17 1.500L1 19z" fill="#111" stroke="#fff" stroke-width="1.300"/><path d="m1.500 3 5.500 4.500L23.500 6.500V23.500L7 25z" fill="#fff" stroke="#111" stroke-width="1.300"/><path d="M11.500 20.500v-10l7 10v-10M10 10.500h3M10 20.500h3M17 10.500h3" fill="none" stroke="#111" stroke-width="2"/></svg></span>
    <span class="app active"><svg width="26" height="30"><use href="#brave"/></svg></span>
    <span class="app run"><svg width="30" height="30" viewBox="0 0 30 30"><rect y="4" width="30" height="22" rx="1.500" fill="#3f3f3f"/><path d="M0 5.500A1.500 1.500 0 0 1 1.500 4h27A1.500 1.500 0 0 1 30 5.500V8H0z" fill="#8d8d8d"/><path d="m4 11 6 6-6 6" fill="none" stroke="#ccc" stroke-width="2.500"/><path d="M13 22h9" stroke="#fff" stroke-width="2.500"/></svg></span>
    <span class="app run"><svg width="30" height="30" viewBox="0 0 30 30"><circle cx="15" cy="15" r="15" fill="#ff6c37"/><path d="m8.500 23.500 4-7 5.500-5 2 2-6 6z" fill="#ffe3d6"/><circle cx="20.500" cy="9" r="2.600" fill="#fff"/><path d="m13 15.500 3 3" stroke="#ff6c37"/></svg></span>
    <span class="app run"><svg width="30" height="30" viewBox="0 0 30 30"><path d="m21 1 8 3.500v21L21 29z" fill="#2b9ff0"/><path d="M22 8.500 3 22l-2.500-2v-1L21 1zM22 21.500 3 8 .5 10v1L21 29z" fill="#0c7bc9"/></svg></span>
    <span class="app run"><svg width="30" height="30"><use href="#chrome"/></svg><svg class="avatar" width="20" height="20" viewBox="0 0 20 20"><path d="M1 18C0 10 3 0 10 0s9 9 9 18c-5 3-12 3-18 0z" fill="#463639"/><ellipse cx="10" cy="9" rx="3.800" ry="5" fill="#d2a593"/><path d="M5 19c1-4 9-4 10 0z" fill="#181820"/></svg></span>
    <span class="app run"><svg width="26" height="27" viewBox="0 0 26 27"><rect width="26" height="27" rx="3" fill="url(#g-photo)"/><path d="M0 24 10 12c2-2 4-2 6 0l10 12a3 3 0 0 1-3 3H3a3 3 0 0 1-3-3z" fill="#39c2f5"/><circle cx="19.500" cy="6" r="2.500" fill="#fff"/></svg></span>
  </div>
  <div class="tray">
    <svg width="14" height="9" viewBox="0 0 14 9"><path d="m1 8 6-6 6 6" fill="none" stroke="#fff" stroke-width="1.700"/></svg>
    <span class="lang"><span>ENG</span><span>IN</span></span>
    <svg width="20" height="16" viewBox="0 0 20 16"><g fill="none" stroke="#fff" stroke-width="1.500"><path d="M.8 6a13 13 0 0 1 18.400 0M3.500 9a9.200 9.200 0 0 1 13 0M6.300 11.800a5.300 5.300 0 0 1 7.400 0"/></g><circle cx="10" cy="13.800" r="1.900" fill="#fff"/></svg>
    <svg width="20" height="18" viewBox="0 0 20 18"><path d="M.8 6.500h3.500L9 2v14l-4.700-4.500H.8zM11.500 6a4.500 4.500 0 0 1 0 6M13.800 3.500a8 8 0 0 1 0 11M16 1.300a11.500 11.500 0 0 1 0 15.400" fill="none" stroke="#fff" stroke-width="1.400"/></svg>
    <svg width="20" height="17" viewBox="0 0 20 17"><path d="M8 4h7.500A2.500 2.500 0 0 1 18 6.500v7a2.500 2.500 0 0 1-2.500 2.500h-11A2.500 2.500 0 0 1 2 13.500V12" fill="none" stroke="#fff" stroke-width="1.500"/><path d="M9 6h6.500a1 1 0 0 1 1 1v6a1 1 0 0 1-1 1h-11l.5-2zM18 8h2v4h-2zM4 0 0 7h2.500l-1 5 6-7H5l1-5z" fill="#fff"/></svg>
    <span class="clock"><span>19:52</span><span>14-08-2025</span></span>
    <svg width="18" height="20" viewBox="0 0 18 20"><path d="M8 1.500A6 6 0 0 0 2 8v5l-1.500 3h15L14 13V8a6 6 0 0 0-6-6.500zM5.500 17.500h5a2.500 2.500 0 0 1-5 0z" fill="#fff"/><path d="M5.500 7h4l-4 5h4" fill="none" stroke="#202020" stroke-width="1.500"/><path d="M10 1h8v6h-6z" fill="#202020"/><path d="M12 1h4.500L12 5.500h4.500" fill="none" stroke="#fff" stroke-width="1.500"/></svg>
  </div>
</footer>
</body>
</html>
```
FILE: styles.css
```css
* { box-sizing: border-box; }

body {
  margin: 0;
  width: 1920px;
  height: 1080px;
  overflow: hidden;
  display: flex;
  flex-direction: column;
  font-family: "Open Sans", "Noto Sans", sans-serif;
  background: #fff;
}

h2, h3, p { margin: 0; }
button { border: 0; padding: 0; font-family: inherit; }
svg { display: block; flex: none; }
.sprite { position: absolute; width: 0; height: 0; }
.serif { font-family: "Liberation Serif", serif; }

/* Tab strip */
.tabstrip {
  height: 50px;
  flex: none;
  display: flex;
  align-items: center;
  padding-left: 1.5px;
  background: #1f1e23;
}
.tabs { display: flex; }
.tab {
  width: 33.72px;
  height: 20px;
  display: flex;
  justify-content: center;
  border-right: 1px solid #3a393e;
}
.tabs.wide .tab { width: 35px; }
.tab svg { width: 20px; height: 20px; }
.tab.audio { padding-left: 10px; align-items: center; }
.tab.audio svg { width: 16px; height: 16px; }
.tab.last { border-right-color: transparent; }
.tab-active {
  width: 39px;
  height: 40px;
  margin-left: 2px;
  border-radius: 10px;
  background: #353439;
  color: #fff;
  display: flex;
  align-items: center;
  justify-content: center;
}
.tab-new { margin-left: 20px; }
.window-controls { margin-left: auto; padding-right: 22px; display: flex; gap: 43px; }

/* Toolbar */
.toolbar {
  height: 51px;
  flex: none;
  display: flex;
  align-items: center;
  padding-left: 22px;
  background: #3b3a3f;
  border-bottom: 1px solid #2d2c31;
}
.nav-buttons { display: flex; align-items: center; gap: 26px; width: 276px; }
.reload { margin-left: -7px; }
.bookmark { margin-right: 21px; }
.address {
  width: 805px;
  height: 40px;
  border-radius: 10px;
  background: #252429;
  display: flex;
  align-items: center;
  padding: 0 14px 0 12px;
}
.url {
  margin-left: 20px;
  padding-bottom: 1px;
  flex: 1;
  font-size: 17.100px;
  letter-spacing: -0.45px;
  color: #ececee;
}
.rule { width: 1px; height: 20px; background: #8a898e; margin: 0 14px 0 11px; }
.address > svg:last-child { margin-left: 21px; }
.extensions { margin-left: 111.500px; display: flex; }
.extensions span, .browser-tools span {
  width: 37.500px;
  display: flex;
  justify-content: center;
}
.extensions svg, .browser-tools svg { width: 21px; height: 21px; }
.extensions .large { width: 23px; height: 23px; }
.rule.dark { width: 2px; background: #222126; margin: 0 11px 0 10px; }
.browser-tools { display: flex; color: #e4e4e6; }
.browser-tools span { width: 37.200px; }

/* Browser content area */
.viewport { flex: 1; min-height: 0; display: flex; }
.page {
  width: 1845px;
  overflow: hidden;
  padding: 20px 0 0 523px;
  display: flex;
  flex-direction: column;
  gap: 40px;
}
.card {
  width: 800px;
  flex: none;
  border: 1px solid #e5e7eb;
  border-radius: 20px;
  background: #fff;
  box-shadow: 0 12px 19px -4px rgba(0, 0, 0, .1), 0 5px 8px -5px rgba(0, 0, 0, .1);
  overflow: hidden;
}
.card-header {
  height: 165px;
  padding-top: 20px;
  background: #2563eb;
  color: #fff;
  display: flex;
  flex-direction: column;
  align-items: center;
}
.card-header h2 {
  margin-top: 11px;
  font-size: 24.500px;
  line-height: 35px;
  font-weight: 700;
  letter-spacing: -0.5px;
}
.card-header p {
  margin-top: 4px;
  font-size: 17.200px;
  line-height: 25px;
  letter-spacing: -0.33px;
  color: #dbeafe;
}
.icon-tile {
  width: 50px;
  height: 50px;
  flex: none;
  border-radius: 15px;
  background: #dcfce7;
  display: flex;
  align-items: center;
  justify-content: center;
}
.icon-tile.on-blue { background: rgba(255, 255, 255, .2); }
.icon-tile.big { width: 60px; height: 60px; }
.card-body { padding: 20px; }
.dropzone {
  height: 239px;
  padding-top: 30px;
  border: 2px dashed #86efac;
  border-radius: 15px;
  background: #f0fdf4;
  display: flex;
  flex-direction: column;
  align-items: center;
}
.file-name {
  margin-top: 14px;
  font-size: 17px;
  line-height: 27px;
  font-weight: 600;
  letter-spacing: -0.45px;
  color: #374151;
}
.file-size {
  margin-top: 2px;
  font-size: 14.500px;
  line-height: 25px;
  letter-spacing: -0.2px;
  color: #6b7280;
}
.remove {
  width: 111px;
  height: 35px;
  margin-top: 12px;
  border-radius: 8px;
  background: #f3f4f6;
  color: #374151;
  display: flex;
  align-items: center;
  justify-content: center;
  gap: 7px;
  padding-left: 1px;
  font-size: 17px;
  letter-spacing: -0.4px;
}
.primary {
  width: 100%;
  height: 60px;
  border-radius: 15px;
  color: #fff;
  display: flex;
  align-items: center;
  justify-content: center;
  gap: 11px;
  font-size: 19.500px;
  font-weight: 600;
  letter-spacing: -0.46px;
  box-shadow: 0 5px 8px -1px rgba(0, 0, 0, .1), 0 2px 5px -2px rgba(0, 0, 0, .1);
}
.primary.blue { margin-top: 20px; background: #2563eb; }
.primary.green { margin-top: 27px; background: #16a34a; }

.ask { height: 420px; padding: 30px; }
.ask-header { display: flex; align-items: center; gap: 14.500px; height: 61px; }
.ask-header .icon-tile { margin-bottom: 2px; }
.ask-header h3 {
  font-size: 22px;
  line-height: 35px;
  font-weight: 700;
  letter-spacing: -0.55px;
  color: #1f2937;
}
.ask-header p {
  padding-top: 1px;
  font-size: 17px;
  line-height: 26px;
  letter-spacing: -0.2px;
  color: #6b7280;
}
.query {
  margin-top: 19px;
  height: 132px;
  padding: 20px 22px 0 20px;
  border: 1px solid #d1d5db;
  border-radius: 15px;
  display: flex;
  justify-content: space-between;
  font-size: 19.500px;
  line-height: 32px;
  letter-spacing: -0.2px;
  color: #000;
}
.query svg { margin-top: 2px; color: #9ca3af; }

.scrollbar {
  width: 19px;
  background: #2c2c2c;
  display: flex;
  flex-direction: column;
  align-items: center;
  padding: 6px 0 5px;
}
.thumb { width: 11px; height: 343px; margin-top: 7px; border-radius: 6px; background: #9f9f9f; }
.scrollbar .down { margin-top: auto; }

.sidebar {
  width: 56px;
  padding-left: 1px;
  background: #3b3a40;
  color: #f0f0f2;
  display: flex;
  flex-direction: column;
  align-items: center;
}
.sidebar .item, .scroll-up, .scroll-down, .add, .settings {
  flex: none;
  display: flex;
  align-items: center;
  justify-content: center;
}
.sidebar .item { height: 45px; }
.scroll-up { height: 30px; margin-bottom: 4.500px; }
.scroll-down { height: 9px; }
.add { height: 54px; }
.settings { height: 56px; }
.item.letter { font-size: 23px; }
.white { background: #fff; }

/* Taskbar */
.taskbar {
  height: 60px;
  flex: none;
  display: flex;
  align-items: center;
  background: #202020;
  border-top: 1px solid #47464b;
  color: #fff;
  font-size: 15px;
}
.weather { width: 447px; padding-left: 25px; display: flex; gap: 9px; }
.weather-icon { position: relative; width: 30px; padding-top: 4px; }
.weather-icon b {
  position: absolute;
  left: 14px;
  top: -4px;
  width: 20px;
  height: 20px;
  border-radius: 50%;
  background: #ff99a4;
  color: #222;
  font-size: 14px;
  font-weight: 400;
  line-height: 20px;
  text-align: center;
}
.weather-text, .lang, .clock { display: flex; flex-direction: column; line-height: 20px; margin-top: -3px; }
.weather-text { letter-spacing: -0.15px; }
.dim { color: #c4c4c4; }
.launcher { display: flex; align-items: center; gap: 17px; }
.search {
  width: 275px;
  height: 40px;
  border-radius: 20px;
  background: #404040;
  border: 1px solid #4c4c4c;
  display: flex;
  align-items: center;
  padding-left: 14px;
  gap: 12px;
  font-size: 17px;
  letter-spacing: -0.3px;
  color: #d6d6d6;
}
.apps { display: flex; margin-left: 2px; }
.app {
  position: relative;
  width: 55px;
  height: 50px;
  display: flex;
  align-items: center;
  justify-content: center;
}
.app > svg { margin-top: -1px; }
.app.active {
  width: 49px;
  margin: 0 3px;
  border-radius: 5px;
  background: #2e2e2e;
  border: 1px solid #363636;
}
.run::after, .active::after {
  content: "";
  position: absolute;
  bottom: 1px;
  left: calc(50% - 4px);
  width: 8px;
  height: 4px;
  border-radius: 2px;
  background: #9a9a9a;
}
.active::after { left: calc(50% - 10px); bottom: 0; width: 20px; background: #dd9be3; }
.avatar { position: absolute; left: 28px; top: 3px; }
.tray { margin-left: auto; padding-right: 25px; display: flex; align-items: center; gap: 10px; }
.lang { width: 54px; margin-left: 4px; margin-right: 2px; text-align: center; }
.clock { width: 78px; margin-left: 9px; text-align: right; letter-spacing: -0.1px; }
```
